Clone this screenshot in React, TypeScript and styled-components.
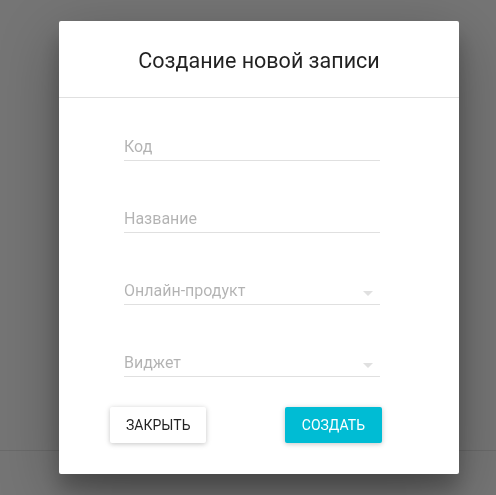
import React from "react";
import styled, { createGlobalStyle } from "styled-components";

const Global = createGlobalStyle`
  html, body { margin: 0; padding: 0; }
  body {
    font-family: Roboto, "Liberation Sans", Arial, sans-serif;
    background: #757575;
    width: 496px;
    height: 495px;
    overflow: hidden;
  }
`;

const Page = styled.div`
  width: 496px;
  height: 495px;
  background: #757575;
`;

const PageBand = styled.div`
  height: 450px;
  border-bottom: 1px solid #6a6a6a;
`;

const Dialog = styled.div`
  position: fixed;
  left: 59px;
  top: 21px;
  width: 400px;
  background: #ffffff;
  border-radius: 2px;
  box-shadow: 0 19px 60px rgba(0, 0, 0, 0.3), 0 15px 20px rgba(0, 0, 0, 0.22);
  display: flex;
  flex-direction: column;
`;

const Title = styled.h3`
  margin: 0;
  padding: 24px 24px 20px;
  font-size: 21.5px;
  font-weight: 400;
  line-height: 32px;
  color: rgba(0, 0, 0, 0.87);
  text-align: center;
  border-bottom: 1px solid #e0e0e0;
`;

const Body = styled.div`
  padding: 23px 79px 0 65px;
  display: flex;
  flex-direction: column;
  gap: 24px;
`;

const Field = styled.div`
  height: 48px;
  display: flex;
  flex-direction: column;
  justify-content: flex-end;
`;

const Line = styled.div`
  display: flex;
  align-items: center;
  justify-content: space-between;
  height: 24px;
  padding-bottom: 1px;
  border-bottom: 1px solid #e0e0e0;
  margin-bottom: 8px;
`;

const Hint = styled.span`
  font-size: 16px;
  line-height: 24px;
  color: rgba(0, 0, 0, 0.3);
`;

const Arrow = styled.svg`
  width: 24px;
  height: 24px;
  fill: #e0e0e0;
  flex: none;
  margin-top: 3px;
`;

const Actions = styled.div`
  display: flex;
  justify-content: space-between;
  padding: 22px 77px 31px 51px;
`;

const Button = styled.button<{ $primary?: boolean }>`
  height: 36px;
  padding: 0 ${(p) => (p.$primary ? "17px" : "16px")};
  border: none;
  border-radius: 2px;
  font-family: Roboto, "Liberation Sans", Arial, sans-serif;
  font-size: 14px;
  font-weight: 400;
  text-transform: uppercase;
  letter-spacing: 0;
  background: ${(p) => (p.$primary ? "#00bcd4" : "#ffffff")};
  color: ${(p) => (p.$primary ? "#ffffff" : "rgba(0, 0, 0, 0.87)")};
  box-shadow: 0 1px 6px rgba(0, 0, 0, 0.12), 0 1px 4px rgba(0, 0, 0, 0.12);
  cursor: pointer;
`;

const TextField = ({ hint, select }: { hint: string; select?: boolean }) => (
  <Field>
    <Line>
      <Hint>{hint}</Hint>
      {select && (
        <Arrow viewBox="0 0 24 24">
          <path d="M7 10l5 5 5-5z" />
        </Arrow>
      )}
    </Line>
  </Field>
);

export default function App() {
  return (
    <Page>
      <Global />
      <PageBand />
      <Dialog>
        <Title>Создание новой записи</Title>
        <Body>
          <TextField hint="Код" />
          <TextField hint="Название" />
          <TextField hint="Онлайн-продукт" select />
          <TextField hint="Виджет" select />
        </Body>
        <Actions>
          <Button>Закрыть</Button>
          <Button $primary>Создать</Button>
        </Actions>
      </Dialog>
    </Page>
  );
}
